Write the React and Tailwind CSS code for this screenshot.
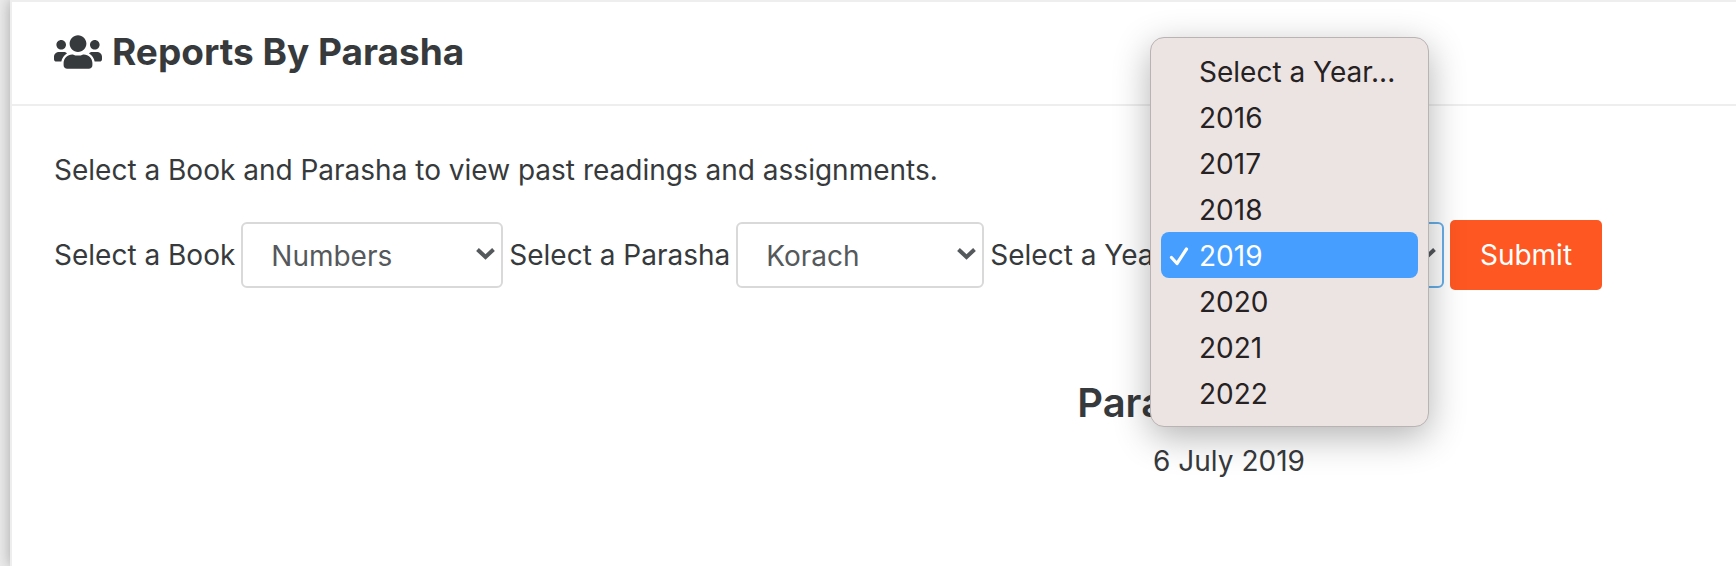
import { useState } from "react"
import { FaUsers } from "react-icons/fa"

const books = ["Genesis", "Exodus", "Leviticus", "Numbers", "Deuteronomy"]
const parashot = ["Bamidbar", "Naso", "Behaalotecha", "Shelach", "Korach", "Chukat", "Balak"]
const years = ["Select a Year...", "2016", "2017", "2018", "2019", "2020", "2021", "2022"]

const SelectField = ({ id, label, options, value, onChange, className, children }) => (
  <div className="flex shrink-0 items-center gap-1.5">
    <label htmlFor={id} className="whitespace-nowrap">
      {label}
    </label>
    <div className="relative">
      <select
        id={id}
        value={value}
        onChange={(e) => onChange(e.target.value)}
        className={`block h-[66px] appearance-none rounded-md border-2 bg-white pt-0.5 pl-7 text-[28px] text-[#55595c] outline-none ${className}`}
      >
        {options.map((option) => (
          <option key={option}>{option}</option>
        ))}
      </select>
      <svg
        className="pointer-events-none absolute top-[26px] right-2 h-3 w-[19px]"
        viewBox="0 0 19 12"
        fill="none"
        stroke="#55595c"
        strokeWidth="4"
        aria-hidden="true"
      >
        <path d="M1.5 1.5 9.5 9 17.5 1.5" />
      </svg>
      {children}
    </div>
  </div>
)

const CheckMark = () => (
  <svg width="20" height="20" viewBox="0 0 20 20" fill="none" stroke="currentColor" strokeWidth="3.2" strokeLinecap="round" strokeLinejoin="round" aria-hidden="true">
    <path d="M2.5 11.5 8 17.5 17.5 3" />
  </svg>
)

const YearMenu = ({ value, onPick }) => (
  <ul
    role="listbox"
    aria-label="Year"
    className="absolute -top-[185px] -left-5 z-10 w-[279px] rounded-[14px] border border-[#b9b3b3] bg-[#ece4e2] p-2.5 text-[#262223] shadow-[0_10px_36px_rgba(0,0,0,0.3)]"
  >
    {years.map((year) => (
      <li
        key={year}
        role="option"
        aria-selected={year === value}
        onClick={() => onPick(year)}
        className={`flex h-[46px] items-center rounded-lg pt-0.5 pl-2 whitespace-nowrap ${year === value ? "bg-[#469eff] text-white" : ""}`}
      >
        <span className="w-[30px]">{year === value && <CheckMark />}</span>
        {year}
      </li>
    ))}
  </ul>
)

const App = () => {
  const [book, setBook] = useState("Numbers")
  const [parasha, setParasha] = useState("Korach")
  const [year, setYear] = useState("2019")

  return (
    <div className="min-h-screen overflow-hidden bg-[#ececec] pl-2.5 font-['Inter',sans-serif] text-[28px] leading-10 text-[#373a3c]">
      <main className="min-h-screen border-t-2 border-l-2 border-[#eeeeee] bg-white shadow-[0_0_14px_rgba(0,0,0,0.3)]">
        <header className="flex items-center gap-2.5 border-b-2 border-[#eeeeee] px-[42px] pt-[29px] pb-[31px]">
          <FaUsers size={48} className="-my-2" />
          <h1 className="text-[37px] leading-[42px] font-bold">Reports By Parasha</h1>
        </header>

        <div className="px-[42px] pt-11">
          <p>Select a Book and Parasha to view past readings and assignments.</p>

          <form className="mt-[30px] flex items-center gap-1.5" onSubmit={(e) => e.preventDefault()}>
            <SelectField id="book" label="Select a Book" options={books} value={book} onChange={setBook} className="w-[262px] border-[#d9d9d9]" />
            <SelectField id="parasha" label="Select a Parasha" options={parashot} value={parasha} onChange={setParasha} className="w-[248px] border-[#d9d9d9]" />
            <SelectField id="year" label="Select a Year" options={years} value={year} onChange={setYear} className="w-[274px] border-[#66afe9]">
              <YearMenu value={year} onPick={setYear} />
            </SelectField>
            <button type="submit" className="h-[70px] w-[152px] shrink-0 rounded-[5px] bg-[#ff5722] text-white">
              Submit
            </button>
          </form>

          <section className="mt-[91px] pl-[710px] text-center">
            <h2 className="text-[40px] leading-[44px] font-semibold">Parasha Korach</h2>
            <p className="mt-4">6 July 2019</p>
          </section>
        </div>
      </main>
    </div>
  )
}

export default App
